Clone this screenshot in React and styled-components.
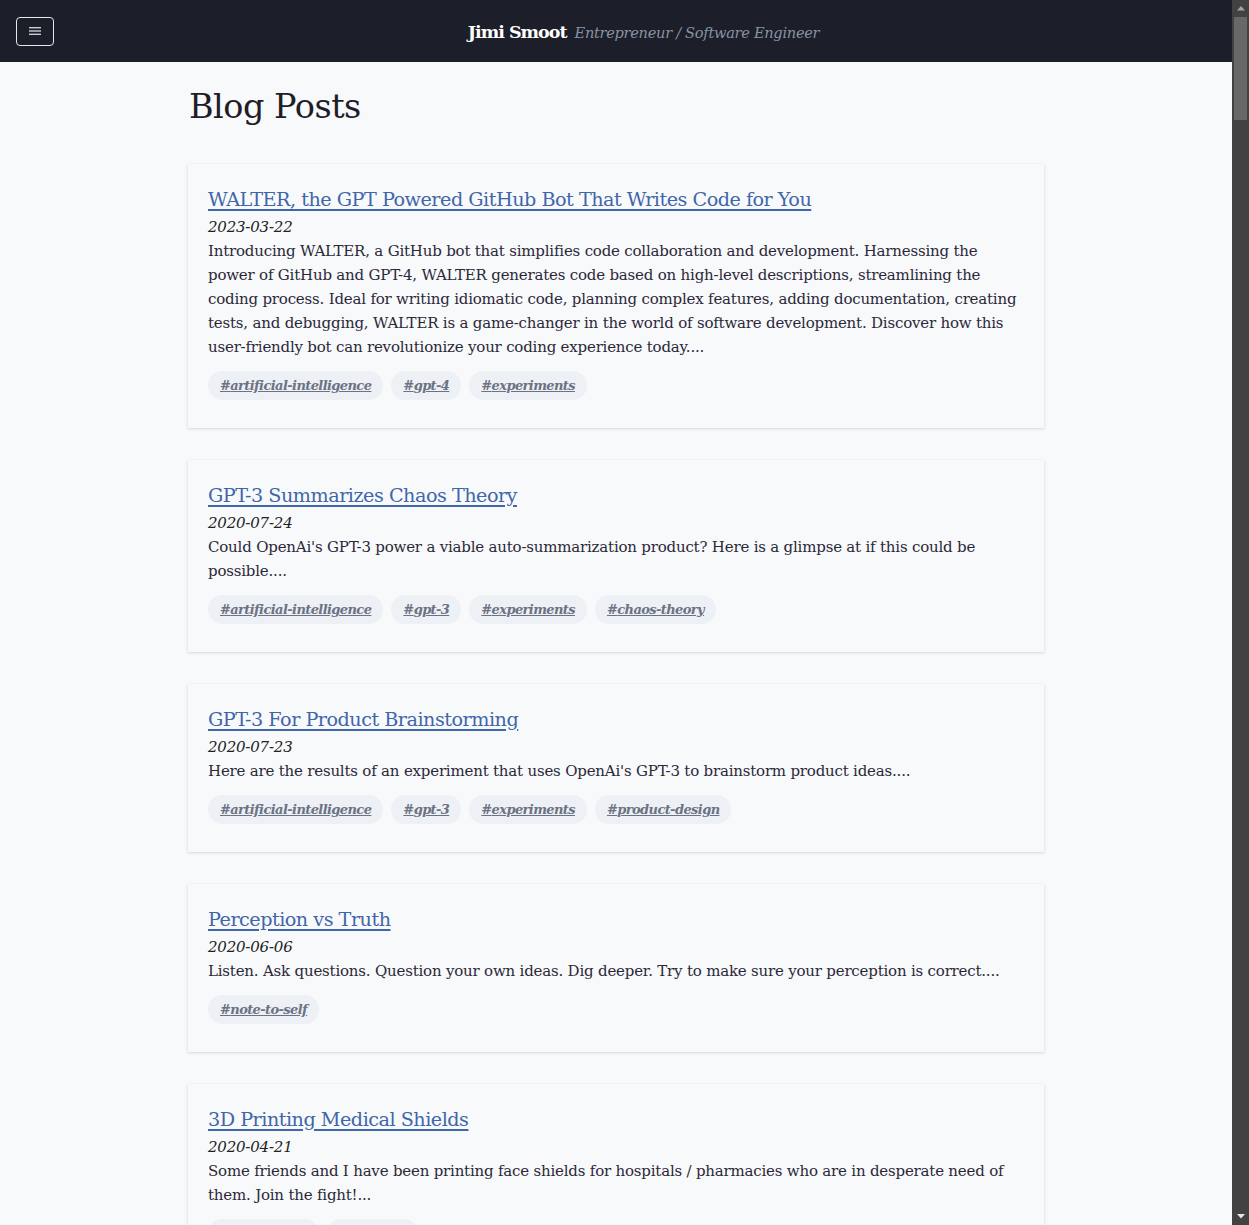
import React from "react";
import styled, { createGlobalStyle } from "styled-components";

const Global = createGlobalStyle`
  html { background: #f8f9fb; }
  body {
    margin: 0 17px 0 0;
    background: #f8f9fb;
    color: #2b2838;
    font-family: "DejaVu Serif", "Liberation Serif", serif;
  }
  * { box-sizing: border-box; }
`;

const NavBar = styled.header`
  height: 62px;
  background: #1c1f29;
  display: flex;
  align-items: center;
  padding: 0 16px;
`;

const MenuButton = styled.button`
  width: 38px;
  height: 29px;
  border: 1px solid #e5e7eb;
  border-radius: 4px;
  background: transparent;
  display: flex;
  align-items: center;
  justify-content: center;
  padding: 0;
  cursor: pointer;
`;

const Brand = styled.div`
  flex: 1;
  display: flex;
  justify-content: center;
  align-items: baseline;
  gap: 8px;
  padding: 2px 0 0 17px;
`;

const BrandName = styled.span`
  color: #ffffff;
  font-weight: 700;
  font-size: 17.5px;
  letter-spacing: -1px;
`;

const BrandRole = styled.span`
  color: #8892a4;
  font-style: italic;
  font-size: 14.6px;
  letter-spacing: -0.3px;
`;

const Main = styled.main`
  max-width: 856px;
  margin: 0 auto;
  padding: 22px 0 40px;
`;

const PageTitle = styled.h1`
  margin: 0 0 34px 1px;
  font-size: 33.5px;
  font-weight: 400;
  color: #1e1d29;
  line-height: 46px;
  letter-spacing: -0.5px;
`;

const PostList = styled.div`
  display: flex;
  flex-direction: column;
  gap: 32px;
`;

const Card = styled.article`
  background: #f8f9fb;
  box-shadow: 0 1px 3px rgba(0, 0, 0, 0.12), 0 0 1px rgba(0, 0, 0, 0.08);
  padding: 21px 20px 28px;
`;

const PostTitle = styled.a`
  display: block;
  font-size: 19.2px;
  line-height: 30px;
  color: #3f66a9;
  text-decoration: underline;
  text-underline-offset: 3px;
  text-decoration-thickness: 2px;
  letter-spacing: -0.5px;
`;

const PostDate = styled.div`
  font-style: italic;
  font-size: 15px;
  line-height: 24px;
  color: #222;
  letter-spacing: -0.2px;
`;

const Excerpt = styled.p`
  margin: 0;
  font-size: 15px;
  line-height: 24px;
  color: #2b2838;
  letter-spacing: -0.2px;
`;

const Tags = styled.div`
  display: flex;
  flex-wrap: wrap;
  gap: 8px;
  margin-top: 12px;
`;

const Tag = styled.a`
  display: inline-flex;
  align-items: center;
  height: 29px;
  padding: 0 12px;
  border-radius: 15px;
  background: #edf0f4;
  color: #6b7284;
  font-size: 13px;
  font-style: italic;
  font-weight: 700;
  text-decoration: underline;
  letter-spacing: -0.6px;
`;

/* Browser scrollbar as seen in the screenshot, pinned over the right edge */
const ScrollRail = styled.div`
  position: fixed;
  top: 0;
  right: 0;
  width: 17px;
  height: 100vh;
  background: #424242;
  display: flex;
  flex-direction: column;
`;

const ScrollArrow = styled.div`
  height: 17px;
  display: flex;
  align-items: center;
  justify-content: center;
  flex-shrink: 0;
`;

const ScrollTrack = styled.div`
  flex: 1;
  padding: 0 2px;
`;

const ScrollThumb = styled.div`
  height: 103px;
  background: #686868;
`;

const posts = [
  {
    title: "WALTER, the GPT Powered GitHub Bot That Writes Code for You",
    date: "2023-03-22",
    excerpt:
      "Introducing WALTER, a GitHub bot that simplifies code collaboration and development. Harnessing the power of GitHub and GPT-4, WALTER generates code based on high-level descriptions, streamlining the coding process. Ideal for writing idiomatic code, planning complex features, adding documentation, creating tests, and debugging, WALTER is a game-changer in the world of software development. Discover how this user-friendly bot can revolutionize your coding experience today....",
    tags: ["artificial-intelligence", "gpt-4", "experiments"],
  },
  {
    title: "GPT-3 Summarizes Chaos Theory",
    date: "2020-07-24",
    excerpt:
      "Could OpenAi's GPT-3 power a viable auto-summarization product? Here is a glimpse at if this could be possible....",
    tags: ["artificial-intelligence", "gpt-3", "experiments", "chaos-theory"],
  },
  {
    title: "GPT-3 For Product Brainstorming",
    date: "2020-07-23",
    excerpt:
      "Here are the results of an experiment that uses OpenAi's GPT-3 to brainstorm product ideas....",
    tags: ["artificial-intelligence", "gpt-3", "experiments", "product-design"],
  },
  {
    title: "Perception vs Truth",
    date: "2020-06-06",
    excerpt:
      "Listen. Ask questions. Question your own ideas. Dig deeper. Try to make sure your perception is correct....",
    tags: ["note-to-self"],
  },
  {
    title: "3D Printing Medical Shields",
    date: "2020-04-21",
    excerpt:
      "Some friends and I have been printing face shields for hospitals / pharmacies who are in desperate need of them. Join the fight!...",
    tags: ["3d-printing", "covid-19"],
  },
];

const extraTitles = [
  ["Working Remotely With a Distributed Team", "2020-03-30", ["remote-work", "leadership"]],
  ["Lessons From Shipping a Side Project", "2020-02-14", ["side-projects", "startups"]],
  ["Why I Still Write Things Down", "2020-01-19", ["note-to-self"]],
  ["Building a Home Lab on a Budget", "2019-12-08", ["hardware", "experiments"]],
  ["Hiring Your First Engineer", "2019-11-02", ["startups", "hiring"]],
  ["Notes on Technical Debt", "2019-10-11", ["software-engineering"]],
  ["A Simple Deploy Pipeline", "2019-09-17", ["devops", "tooling"]],
  ["Saying No to Good Ideas", "2019-08-25", ["product-design", "note-to-self"]],
  ["Reading List: Summer Edition", "2019-07-30", ["books"]],
  ["Testing the Things That Matter", "2019-07-02", ["testing", "software-engineering"]],
  ["Customer Interviews That Work", "2019-06-12", ["product-design", "startups"]],
  ["Small Teams, Big Problems", "2019-05-20", ["leadership"]],
  ["Learning a New Language Every Year", "2019-04-28", ["learning"]],
  ["The Cost of Context Switching", "2019-04-01", ["productivity"]],
  ["Writing Better Pull Requests", "2019-03-09", ["software-engineering", "tooling"]],
  ["Bootstrapping vs Raising Money", "2019-02-15", ["startups"]],
  ["Automating the Boring Parts", "2019-01-22", ["tooling", "experiments"]],
  ["Year in Review: 2018", "2018-12-31", ["note-to-self"]],
  ["Designing APIs for Humans", "2018-12-04", ["software-engineering"]],
  ["On Code Reviews", "2018-11-10", ["software-engineering", "leadership"]],
  ["Running a Retrospective", "2018-10-18", ["leadership"]],
  ["What I Learned From a Failed Launch", "2018-09-26", ["startups", "note-to-self"]],
  ["Monitoring Without the Noise", "2018-09-01", ["devops"]],
  ["Picking a Database", "2018-08-12", ["software-engineering"]],
  ["Pricing Your First Product", "2018-07-20", ["startups", "product-design"]],
  ["The Joy of Boring Technology", "2018-06-28", ["software-engineering"]],
  ["Onboarding New Developers", "2018-06-03", ["leadership", "hiring"]],
  ["Deep Work in an Open Office", "2018-05-11", ["productivity"]],
  ["Prototyping With Paper", "2018-04-19", ["product-design"]],
  ["A Tour of My Terminal Setup", "2018-03-27", ["tooling"]],
  ["Naming Things Is Hard", "2018-03-02", ["software-engineering"]],
  ["Measuring What Matters", "2018-02-08", ["startups"]],
  ["Starting This Blog", "2018-01-15", ["note-to-self"]],
  ["Keeping Dependencies Up to Date", "2017-12-20", ["devops", "tooling"]],
  ["Feedback Loops", "2017-11-28", ["productivity", "leadership"]],
  ["Microcontrollers for Fun", "2017-11-03", ["hardware", "experiments"]],
  ["Learning in Public", "2017-10-09", ["learning"]],
  ["Estimating Software Projects", "2017-09-14", ["software-engineering"]],
  ["The First Hundred Users", "2017-08-21", ["startups"]],
  ["Refactoring Legacy Code", "2017-07-27", ["software-engineering"]],
  ["Hackathon Recap", "2017-07-02", ["experiments"]],
  ["Choosing a Co-Founder", "2017-06-08", ["startups"]],
  ["Documentation as a Product", "2017-05-15", ["product-design", "software-engineering"]],
  ["Staying Curious", "2017-04-20", ["note-to-self"]],
];

extraTitles.forEach(([title, date, tags]) => {
  posts.push({
    title,
    date,
    excerpt: `A few thoughts on ${title.toLowerCase()} and what I have learned along the way....`,
    tags,
  });
});

function MenuIcon() {
  return (
    <svg width="12" height="10" viewBox="0 0 12 10" aria-hidden="true">
      <rect x="0" y="1" width="12" height="1.4" fill="#c9ccd3" />
      <rect x="0" y="4.3" width="12" height="1.4" fill="#c9ccd3" />
      <rect x="0" y="7.6" width="12" height="1.4" fill="#c9ccd3" />
    </svg>
  );
}

function Arrow({ down }) {
  return (
    <svg width="8" height="5" viewBox="0 0 8 5" aria-hidden="true">
      {down ? (
        <polygon points="0,0 8,0 4,4.5" fill="#e6e6e6" />
      ) : (
        <polygon points="0,4.5 8,4.5 4,0" fill="#a3a3a3" />
      )}
    </svg>
  );
}

export default function App() {
  return (
    <>
      <Global />
      <NavBar>
        <MenuButton aria-label="Menu">
          <MenuIcon />
        </MenuButton>
        <Brand>
          <BrandName>Jimi Smoot</BrandName>
          <BrandRole>Entrepreneur / Software Engineer</BrandRole>
        </Brand>
      </NavBar>
      <Main>
        <PageTitle>Blog Posts</PageTitle>
        <PostList>
          {posts.map((p) => (
            <Card key={p.title}>
              <PostTitle href="#">{p.title}</PostTitle>
              <PostDate>{p.date}</PostDate>
              <Excerpt>{p.excerpt}</Excerpt>
              <Tags>
                {p.tags.map((t) => (
                  <Tag key={t} href="#">#{t}</Tag>
                ))}
              </Tags>
            </Card>
          ))}
        </PostList>
      </Main>
      <ScrollRail aria-hidden="true">
        <ScrollArrow>
          <Arrow />
        </ScrollArrow>
        <ScrollTrack>
          <ScrollThumb />
        </ScrollTrack>
        <ScrollArrow>
          <Arrow down />
        </ScrollArrow>
      </ScrollRail>
    </>
  );
}
